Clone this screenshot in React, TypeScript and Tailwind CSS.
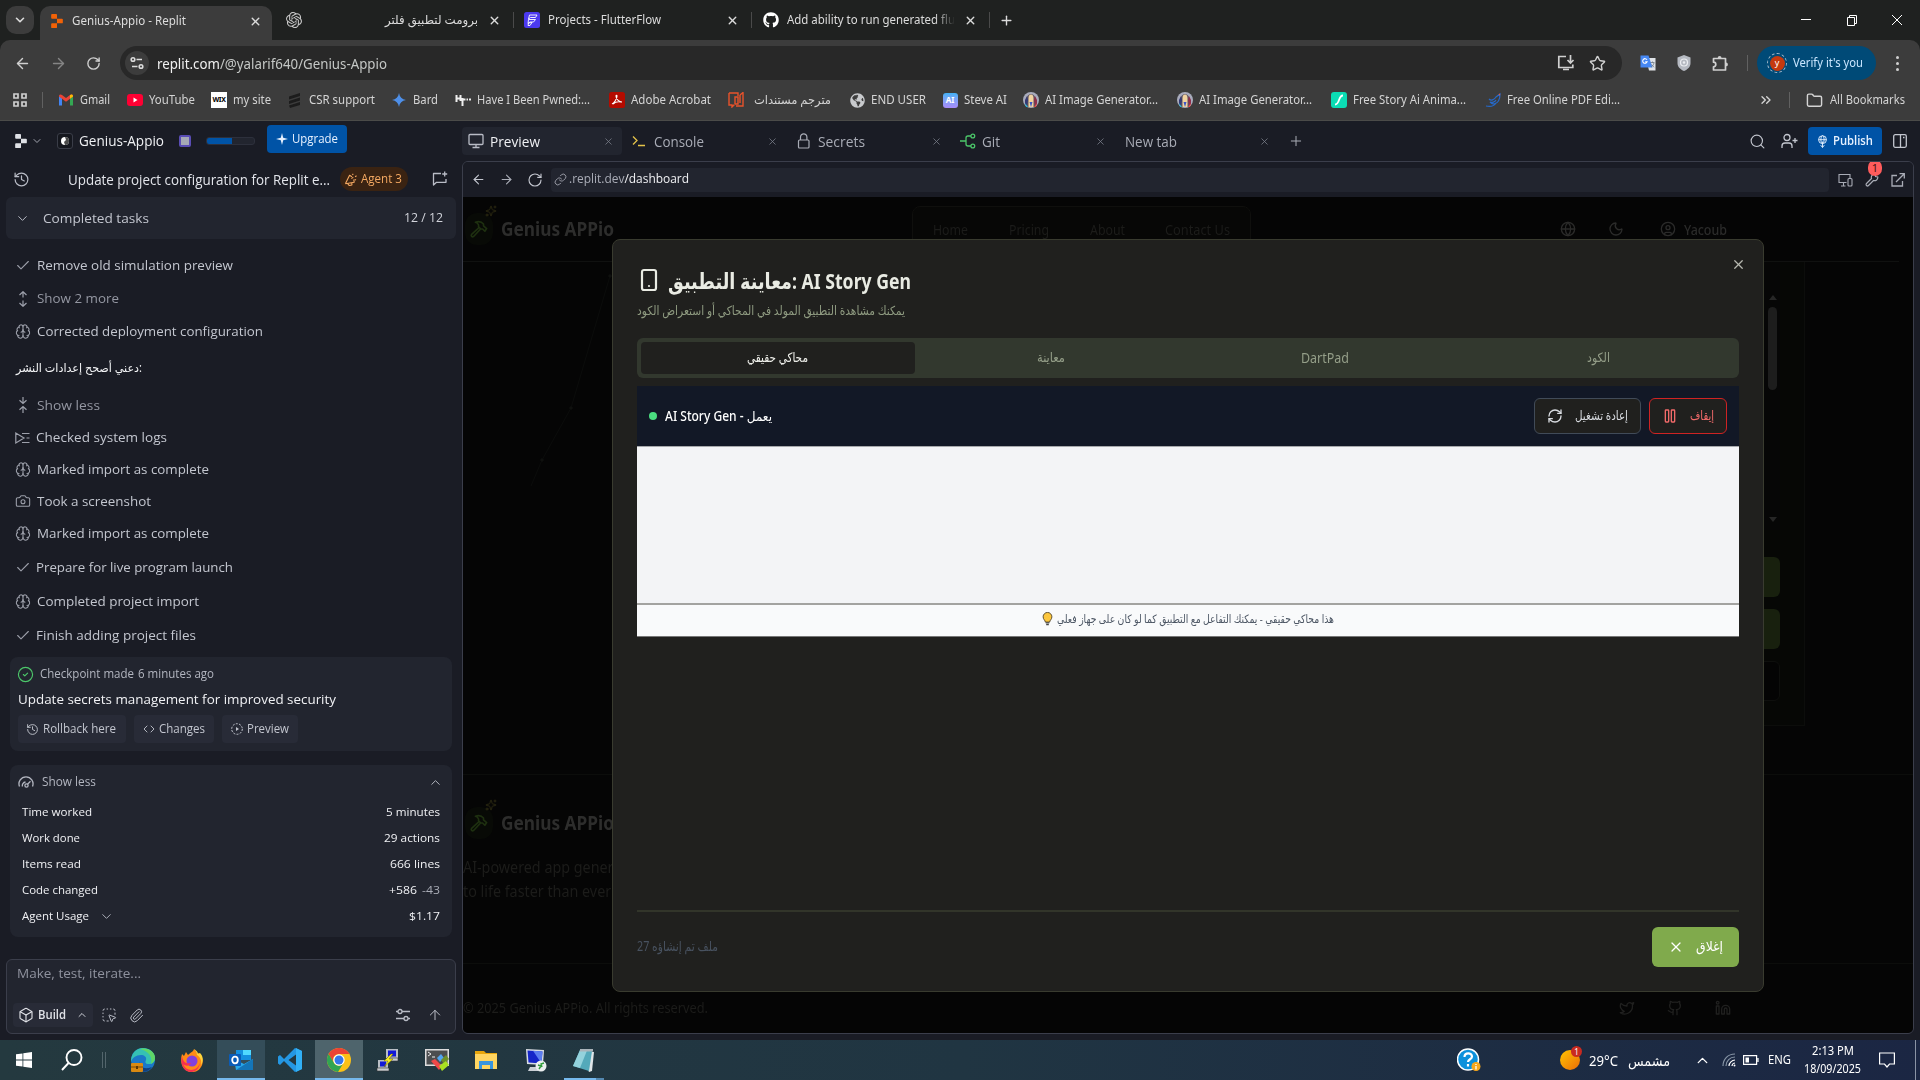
import React, { useLayoutEffect, useRef, useState } from "react";
import {
  ArrowLeft, ArrowRight, ArrowUp, Brain, Camera, Check, ChevronDown, ChevronUp, CircleCheck,
  Code, History, Link, Moon, Globe, Linkedin, Github, Twitter, CircleUser, RefreshCw, X, Plus,
  Search, Paperclip, Box, Star, Folder, Sparkles, Smartphone, ChevronsRight, RotateCw, Gauge,
  SquareDashedMousePointer, Pause, Hammer,
} from "lucide-react";
import { SiOpenai, SiReplit } from "react-icons/si";
import { FaGithub, FaGlobeAmericas } from "react-icons/fa";

type FitProps = { w: number; className?: string; children: React.ReactNode };

/* A single line of text condensed or widened to fill its slot. */
function Fit({ w, className = "", children }: FitProps) {
  const ref = useRef<HTMLSpanElement>(null);
  const [scale, setScale] = useState(1);
  useLayoutEffect(() => {
    const natural = ref.current ? ref.current.getBoundingClientRect().width / scale : 0;
    if (natural) setScale(w / natural);
  }, [w]);
  return (
    <span className={`inline-block shrink-0 whitespace-nowrap text-left ${className}`} style={{ width: w }}>
      <span ref={ref} className="inline-block origin-left" style={{ transform: `scaleX(${scale})` }}>{children}</span>
    </span>
  );
}

/* ---------- Browser chrome ---------- */

function FlutterFlowIcon() {
  return (
    <svg viewBox="0 0 16 16" className="size-4 shrink-0">
      <rect width="16" height="16" rx="2.5" fill="#4B39EF" />
      <path d="M5.500 3h7.500l-1.500 2.500H6.500L4.500 7zM4.500 7.500h7L9.500 10H6l-2 1.500zM4.500 11l3.500-.5-2 3h-2z" fill="none" stroke="#fff" strokeWidth=".9" />
    </svg>
  );
}

function TabStrip() {
  return (
    <div className="flex h-10 items-center bg-[#1f2120] text-[12px] text-[#dcdcdc]">
      <div className="ml-1.5 flex size-7 items-center justify-center rounded-[10px] bg-[#3c3c3c]"><ChevronDown size={14} strokeWidth={2.8} /></div>
      <div className="ml-1.5 mt-1.5 flex h-[34px] w-[232px] items-center rounded-t-[10px] bg-[#3c3c3c] pb-1">
        <SiReplit className="ml-2.5 size-3.5 text-[#f26207]" />
        <Fit w={114} className="ml-2">Genius-Appio - Replit</Fit>
        <X size={13} strokeWidth={2.6} className="ml-[63px]" />
      </div>
      <SiOpenai className="ml-3.5 size-4 text-[#c9c9c9]" />
      <Fit w={93} className="ml-[83px]">برومت لتطبيق فلتر</Fit>
      <X size={13} strokeWidth={2.6} className="ml-[10px]" />
      <span className="ml-3 h-4 w-px bg-[#4a4a4a]" />
      <span className="ml-2.5 flex"><FlutterFlowIcon /></span>
      <Fit w={113} className="ml-2">Projects - FlutterFlow</Fit>
      <X size={13} strokeWidth={2.6} className="ml-[65px]" />
      <span className="ml-3 h-4 w-px bg-[#4a4a4a]" />
      <FaGithub className="ml-[11px] size-4 text-white" />
      <Fit w={168} className="ml-2 [mask-image:linear-gradient(to_right,black_88%,transparent)]">Add ability to run generated flu</Fit>
      <X size={13} strokeWidth={2.6} className="ml-[9px]" />
      <span className="ml-3 h-4 w-px bg-[#4a4a4a]" />
      <Plus size={15} strokeWidth={2.2} className="ml-[9px]" />
      <svg viewBox="0 0 102 12" className="ml-auto mr-[17px] h-3 w-[102px] shrink-0" fill="none" stroke="#fff" strokeWidth="1">
        <path d="M0 5.5h10M46.500 3.500h7v8h-7zM48.500 3.500v-2h7v8h-2M91 1l10 10M101 1L91 11" />
      </svg>
    </div>
  );
}

function TranslateIcon() {
  return (
    <svg viewBox="0 0 16 16" className="size-4 shrink-0">
      <path d="M6 3h9.500v12.500H9z" fill="#dfe3e8" />
      <path d="M.5.5h8l4 12H.5z" fill="#4688f4" />
      <path d="M7 4.800A2.300 2.300 0 1 0 7.200 6.700H5.200" fill="none" stroke="#fff" strokeWidth="1.100" />
      <path d="M10.500 7.500h4M12.500 6.500v1M14 8c-.5 2-1.500 3-2.800 4M11.500 9.500l2.500 2.800" stroke="#6b7680" strokeWidth=".8" fill="none" />
    </svg>
  );
}

function Toolbar() {
  return (
    <div className="bg-[#1f2120]">
      <div className="flex h-10 items-center rounded-t-[10px] bg-[#3c3c3c] text-[#d0d0d0]">
        <ArrowLeft size={17} className="ml-[14px] mt-1.5" />
        <ArrowRight size={17} className="ml-[19px] mt-1.5 text-[#858585]" />
        <RotateCw size={15} strokeWidth={2.2} className="ml-[19px] mt-1.5" />
        <div className="ml-[19px] mt-1.5 flex h-[34px] w-[1502px] items-center rounded-full bg-[#282828]">
          <span className="ml-[5px] flex size-6 items-center justify-center rounded-full bg-[#3c3c3c]">
            <svg viewBox="0 0 14 14" className="size-3.5" fill="none" stroke="#dcdcdc" strokeWidth="1.600">
              <circle cx="3" cy="3.500" r="1.800" /><path d="M6.500 3.500H12M2 10.500h5.500" /><circle cx="11" cy="10.500" r="1.800" />
            </svg>
          </span>
          <Fit w={230} className="ml-2 text-[14px] text-[#c4c7c5]"><span className="text-[#f0f0f0]">replit.com</span>/@yalarif640/Genius-Appio</Fit>
          <svg viewBox="0 0 18 16" className="ml-auto h-4 w-[18px]" fill="none" stroke="currentColor" strokeWidth="1.700"><path d="M9 1.500H1.800v11h14V9.500M6 14.500h6" strokeWidth="1.700" /><path d="M13.500 0v7.500M10.500 5l3 3 3-3" /></svg>
          <Star size={17} className="ml-3.5 mr-4" />
        </div>
        <div className="mt-1.5 flex flex-1 items-center">
          <span className="ml-[18px] flex"><TranslateIcon /></span>
          <svg viewBox="0 0 16 16" className="ml-5 size-4"><path d="M8 0l6.500 2.500V8c0 4-3 6.500-6.500 8-3.500-1.500-6.500-4-6.500-8V2.500z" fill="#b6bac2" /><circle cx="8" cy="7.500" r="3.500" fill="none" stroke="#eceef2" strokeWidth="1.200" /><circle cx="8" cy="7.500" r="1.200" fill="#eceef2" /></svg>
          <svg viewBox="0 0 17 17" className="ml-5 size-[17px]"><path d="M1.500 3.500h12v11.500h-12v-3.200a2.300 2.300 0 0 0 0-4.600z" fill="none" stroke="#d0d0d0" strokeWidth="1.700" strokeLinejoin="round" /><path d="M5.700 3a1.900 1.900 0 0 1 3.800 0zM14 7.500a1.900 1.900 0 0 1 0 3.800z" fill="#d0d0d0" /></svg>
          <span className="ml-[18px] h-4 w-px bg-[#616161]" />
          <div className="ml-[9px] flex h-[34px] w-[119px] items-center rounded-full bg-[#004a77]">
            <span className="ml-2.5 flex size-5 items-center justify-center rounded-full border border-dashed border-[#a9bccb]">
              <span className="flex size-[15px] items-center justify-center rounded-full bg-[#c5390f] pb-0.5 text-[9px] leading-none text-white">y</span>
            </span>
            <Fit w={70} className="ml-1.5 text-[12px] text-[#c9e6ff]">Verify it's you</Fit>
          </div>
          <span className="ml-5 flex flex-col gap-[3px]">
            <i className="size-[3px] rounded-full bg-[#d0d0d0]" /><i className="size-[3px] rounded-full bg-[#d0d0d0]" /><i className="size-[3px] rounded-full bg-[#d0d0d0]" />
          </span>
        </div>
      </div>
    </div>
  );
}

const parrot = (
  <svg viewBox="0 0 16 16" className="size-4">
    <circle cx="8" cy="8" r="8" fill="#a9acbd" /><path d="M3 9a5 7 0 0 1 10 0v6H3z" fill="#5f5560" /><path d="M5.500 6.500a2.500 4 0 0 1 5 0V15h-5z" fill="#f1d3a0" />
    <path d="M2 8l2-4 1 4-1 6-2-2z" fill="#353a74" /><path d="M14 8l-2-4-1 4 1 6 2-2z" fill="#8c2f4b" /><path d="M6.500 10h3l-1.500 5z" fill="#3a56c9" /><path d="M2 11l3 4H3z" fill="#29b6d8" /><path d="M14 11l-3 4h2z" fill="#e64a4a" />
  </svg>
);

const bookmarks: { icon: React.ReactNode; text: string; w: number; gap: number; tg?: number }[] = [
  { icon: <svg viewBox="0 0 16 16" className="size-4"><path d="M1 13.500V4l3 2.200v7.300z" fill="#4285f4" /><path d="M15 13.500V4l-3 2.200v7.300z" fill="#34a853" /><path d="M1 4c0-1.800 1.800-2 3-1.100L8 6l4-3.100c1.200-.9 3-.7 3 1.100v.5l-7 5.200-7-5.200z" fill="#ea4335" /><path d="M12 2.900c1.200-.9 3-.7 3 1.100v.5l-3 2.200z" fill="#fbbc04" /></svg>, text: "Gmail", w: 30, gap: 15 },
  { icon: <svg viewBox="0 0 16 16" className="size-4"><rect y="2" width="16" height="12" rx="3" fill="#f03" /><path d="M6.500 5.500v5l4-2.500z" fill="#fff" /></svg>, text: "YouTube", w: 46, gap: 17 },
  { icon: <span className="flex size-4 items-center justify-center bg-white text-[7px] font-bold tracking-tighter text-black">WIX</span>, text: "my site", w: 38, gap: 16 },
  { icon: <svg viewBox="0 0 16 16" className="size-4"><path d="M2 4.500L13 1v3L2 7.500zM2 9l11-3.500v3L2 12zM2 13.500L13 10v3L3 16z" fill="#1c1c1c" /></svg>, text: "CSR support", w: 66, gap: 16 },
  { icon: <svg viewBox="0 0 16 16" className="size-4"><path d="M8 1c.6 4 3 6.400 7 7-4 .6-6.400 3-7 7-.6-4-3-6.400-7-7 4-.6 6.400-3 7-7z" fill="#4e8fe8" /></svg>, text: "Bard", w: 25, gap: 16 },
  { icon: <svg viewBox="0 0 16 16" className="size-4" stroke="#eee" strokeWidth="2" fill="none"><path d="M1.500 3v7M1 6.500h4M5.500 3v6M7.500 6v8M7 7.500h3.500M11.500 7.500h1.500M14 7.500h2" /></svg>, text: "Have I Been Pwned:...", w: 113, gap: 17 },
  { icon: <svg viewBox="0 0 16 16" className="size-4"><rect width="16" height="16" rx="2.500" fill="#b30b00" /><path d="M3 12c2-1 5-5 5-8 0-1-1-1-1 0 0 3 3 6 6 6M4 12c2-2 5-2.500 8-2" fill="none" stroke="#fff" strokeWidth="1.100" /></svg>, text: "Adobe Acrobat", w: 80, gap: 19 },
  { icon: <svg viewBox="0 0 16 16" className="size-4" fill="none" stroke="#e8532b" strokeWidth="1.400"><path d="M1 1h9v3M1 1v12h3v2l2.500-2.500M7 12V5h3v7H7M12 3v0l3-2.500V14H8M12 3v8" /></svg>, text: "مترجم مستندات", w: 77, gap: 17, tg: 10 },
  { icon: <FaGlobeAmericas className="size-[15px] text-[#c8cacd]" />, text: "END USER", w: 55, gap: 18 },
  { icon: <span className="flex size-[15px] items-center justify-center rounded-[3px] bg-gradient-to-b from-[#3fb1f5] to-[#a78bfa] text-[8px] font-bold text-white">AI</span>, text: "Steve AI", w: 43, gap: 16 },
  { icon: parrot, text: "AI Image Generator...", w: 113, gap: 16 },
  { icon: parrot, text: "AI Image Generator...", w: 113, gap: 19 },
  { icon: <svg viewBox="0 0 16 16" className="size-4"><rect width="16" height="16" rx="3" fill="#0bdcb4" /><path d="M4 12.500c5 0 3-9 8-9" stroke="#fff" strokeWidth="1.800" fill="none" /></svg>, text: "Free Story Ai Anima...", w: 113, gap: 19 },
  { icon: <svg viewBox="0 0 16 16" className="size-4" fill="none" stroke="#2669c9" strokeWidth="1.200"><path d="M1 14c4 1 8 0 10-3M4 7c2 2 5 1 7-2l4-3c0 4-1 9-6 10-2 0-3-1-4-2 2 1 5 0 6-2" /><path d="M14 2l1 1" stroke="#e53" /></svg>, text: "Free Online PDF Edi...", w: 113, gap: 19 },
];

function BookmarksBar() {
  return (
    <div className="flex h-[41px] items-center border-b border-[#4b4b49] bg-[#3c3c3c] text-[12px] text-[#d4d4d4]">
      <svg viewBox="0 0 14 14" className="ml-[13px] size-3.5" fill="none" stroke="#cfcfcf" strokeWidth="1.700"><path d="M1 1h4v4H1zM9 1h4v4H9zM1 9h4v4H1zM9 9h4v4H9z" /></svg>
      <span className="ml-[15px] h-4 w-px bg-[#616161]" />
      {bookmarks.map((b, i) => (
        <span key={i} className="flex shrink-0 items-center" style={{ marginLeft: b.gap }}>
          <span className="flex w-4 shrink-0 justify-center">{b.icon}</span>
          <span className="flex" style={{ marginLeft: b.tg ?? 6 }}><Fit w={b.w}>{b.text}</Fit></span>
        </span>
      ))}
      <ChevronsRight size={16} className="ml-auto" />
      <span className="ml-[15px] h-4 w-px bg-[#616161]" />
      <Folder size={17} className="ml-4" />
      <Fit w={75} className="ml-[7px] mr-[15px]">All Bookmarks</Fit>
    </div>
  );
}

/* ---------- Agent side panel ---------- */

function CollapseIcon() {
  return <svg viewBox="0 0 16 16" className="size-4" fill="none" stroke="currentColor" strokeWidth="1.200"><path d="M8 0v6M4.500 3.200L8 6.500l3.500-3.300M8 16v-6M4.500 12.800L8 9.500l3.500 3.300" /></svg>;
}
function ExpandIcon() {
  return <svg viewBox="0 0 16 16" className="size-4" fill="none" stroke="currentColor" strokeWidth="1.200"><path d="M8 .7V6.500M4.500 4L8 .7 11.500 4M8 15.300V9.500M4.500 12L8 15.300l3.500-3.300" /></svg>;
}
function LogsIcon() {
  return <svg viewBox="0 0 16 16" className="size-4" fill="none" stroke="currentColor" strokeWidth="1.200"><path d="M.8 3v10L9 8zM7 3.500h7.500M11.500 8h3M7 12.500h7.500" /></svg>;
}

const thin = 1.6;
const steps: { icon: React.ReactNode; text: string; w: number; h: number; dim?: boolean; tight?: boolean }[] = [
  { icon: <Check size={17} strokeWidth={thin} />, text: "Remove old simulation preview", w: 196, h: 34 },
  { icon: <ExpandIcon />, text: "Show 2 more", w: 82, h: 33, dim: true },
  { icon: <Brain size={17} strokeWidth={thin} />, text: "Corrected deployment configuration", w: 226, h: 33 },
  { icon: null, text: "دعني أصحح إعدادات النشر:", w: 126, h: 40 },
  { icon: <CollapseIcon />, text: "Show less", w: 63, h: 34, dim: true },
  { icon: <LogsIcon />, text: "Checked system logs", w: 131, h: 31, tight: true },
  { icon: <Brain size={17} strokeWidth={thin} />, text: "Marked import as complete", w: 172, h: 32 },
  { icon: <Camera size={18} strokeWidth={thin} />, text: "Took a screenshot", w: 114, h: 32 },
  { icon: <Brain size={17} strokeWidth={thin} />, text: "Marked import as complete", w: 172, h: 32 },
  { icon: <Check size={17} strokeWidth={thin} />, text: "Prepare for live program launch", w: 197, h: 36, tight: true },
  { icon: <Brain size={17} strokeWidth={thin} />, text: "Completed project import", w: 162, h: 32 },
  { icon: <Check size={17} strokeWidth={thin} />, text: "Finish adding project files", w: 160, h: 36, tight: true },
];

function StatRow({ label, lw, children }: { label: React.ReactNode; lw: number; children: React.ReactNode }) {
  return (
    <div className="flex h-[26px] items-center justify-between pl-3 pr-3">
      <span className="flex items-center"><Fit w={lw}>{label}</Fit>{label === "Agent Usage" && <ChevronDown size={15} strokeWidth={1.6} className="ml-2.5 text-[#a9acb6]" />}</span>
      <span className="flex items-center gap-[5px]">{children}</span>
    </div>
  );
}

function AgentPanel() {
  return (
    <div className="flex w-[462px] shrink-0 flex-col font-['Open_Sans','DejaVu_Sans',sans-serif] text-[#e2e4ea]">
      <div className="flex h-10 items-center">
        <SiReplit className="ml-[14px] size-3.5 text-[#dfe1e6]" />
        <ChevronDown size={12} strokeWidth={2} className="ml-[3px] text-[#a0a3ad]" />
        <span className="ml-3.5 flex size-4 items-center justify-center rounded-[3px] border border-[#3a3d48] bg-[#15171e]">
          <svg viewBox="0 0 8 8" className="size-2"><circle cx="4" cy="4" r="4" fill="#fff" /><path d="M4 0a4 4 0 0 1 0 8L3 5l2-2z" fill="#4a4a4a" /></svg>
        </span>
        <Fit w={85} className="ml-1.5 text-[14.500px] text-[#f0f1f4]">Genius-Appio</Fit>
        <span className="ml-[15px] h-3 w-3 rounded-[2px] border-2 border-[#5a4db5] bg-[#a6a9b5]" />
        <span className="ml-[15px] flex h-2 w-[49px] overflow-hidden rounded-[3px] border border-[#2d303c] bg-[#22252f]"><i className="w-[25px] bg-[#0053a6]" /></span>
        <span className="-mt-1 ml-3 flex h-7 w-20 items-center rounded bg-[#0053a6] text-[12.500px] font-medium text-[#e6f1ff]">
          <svg viewBox="0 0 12 12" className="ml-[9px] size-3"><path d="M6 0l1.200 4.800L12 6 7.200 7.200 6 12 4.800 7.200 0 6l4.800-1.200z" fill="#e6f1ff" /></svg>
          <Fit w={46} className="ml-1">Upgrade</Fit>
        </span>
      </div>
      <div className="flex h-9 items-center">
        <History size={17} strokeWidth={1.700} className="ml-[13px] text-[#b9bcc6]" />
        <Fit w={262} className="ml-[38px] text-[14px] font-medium">Update project configuration for Replit e...</Fit>
        <span className="ml-2.5 flex h-6 w-[68px] items-center rounded-full bg-[#3a2312] text-[12px] text-[#f5a962]">
          <svg viewBox="0 0 14 14" className="ml-1 size-[13px]" fill="none" stroke="currentColor" strokeWidth="1.200"><path d="M1.500 11.500L6 2.500l2.500 1.500M1.500 11.500L11 10l-.5-3M4 11.500l1.500 2 3-.5v-2M8 6l2-1.500M9 2l1-1M12 4l1.500-1M11.500 7l1.500.5" strokeLinejoin="round" /></svg>
          <Fit w={41} className="ml-1">Agent 3</Fit>
        </span>
        <svg viewBox="0 0 16 16" className="ml-6 size-4 text-[#b9bcc6]" fill="none" stroke="currentColor" strokeWidth="1.300"><path d="M9 2.500H1.500V14l3-2.700h9.500V8M12.700.5v5M10.200 3h5" strokeLinejoin="round" /></svg>
      </div>
      <div className="mx-1.5 flex h-[42px] items-center rounded-md bg-[#22252f]">
        <ChevronDown size={15} strokeWidth={1.600} className="ml-[9px] text-[#b9bcc6]" />
        <Fit w={106} className="ml-[13px] text-[13.500px] text-[#c3c6cf]">Completed tasks</Fit>
        <Fit w={39} className="ml-auto mr-[13px] text-[12.500px] text-[#d2d4db]">12 / 12</Fit>
      </div>
      <div className="mt-[9px] pl-[15px] text-[13.500px] text-[#c3c6cf]">
        {steps.map((s, i) => (
          <div key={i} className={`flex items-center ${s.dim ? "text-[#9497a2]" : ""}`} style={{ height: s.h }}>
            {s.icon && <span className={`flex w-4 shrink-0 justify-center text-[#9da0ab] ${s.tight ? "mr-[5px]" : "mr-1.5"}`}>{s.icon}</span>}
            <Fit w={s.w} className={s.icon ? "" : "ml-px text-[12px] text-[#f3f4f6]"}>{s.text}</Fit>
          </div>
        ))}
      </div>
      <div className="mx-2.5 mt-1 h-[94px] rounded-lg bg-[#22252f] px-2">
        <div className="flex h-[34px] items-center text-[12px] text-[#b3b6c0]">
          <CircleCheck size={17} strokeWidth={1.600} className="-ml-px text-[#4cc76a]" />
          <Fit w={94} className="ml-1.5">Checkpoint made</Fit>
          <Fit w={76} className="ml-1">6 minutes ago</Fit>
        </div>
        <div className="flex h-4 items-center"><Fit w={318} className="text-[13.500px] text-[#f0f1f4]">Update secrets management for improved security</Fit></div>
        <div className="mt-2 flex gap-2 text-[12px] text-[#c3c6cf]">
          <span className="flex h-7 w-[108px] items-center rounded bg-[#282b37] pl-2"><History size={13} strokeWidth={1.700} /><Fit w={73} className="ml-1">Rollback here</Fit></span>
          <span className="flex h-7 w-20 items-center rounded bg-[#282b37] pl-[9px]"><Code size={12} strokeWidth={1.800} /><Fit w={46} className="ml-1">Changes</Fit></span>
          <span className="flex h-7 w-[76px] items-center rounded bg-[#282b37] pl-[9px]">
            <svg viewBox="0 0 12 12" className="size-3" fill="none" stroke="currentColor"><circle cx="6" cy="6" r="5.300" strokeDasharray="2 1.300" /><path d="M5 4v4l3-2z" fill="currentColor" stroke="none" /></svg>
            <Fit w={42} className="ml-1">Preview</Fit>
          </span>
        </div>
      </div>
      <div className="mx-2.5 mt-3.5 h-[172px] rounded-lg bg-[#22252f] text-[11.500px] font-medium text-[#f0f1f4]">
        <div className="flex h-[34px] items-center pl-2 pr-2.5 text-[12px] font-normal text-[#b3b6c0]">
          <svg viewBox="0 0 16 16" className="size-4" fill="none" stroke="currentColor" strokeWidth="1.300"><path d="M1.500 12.500a7 7 0 1 1 13 0M4.500 12.500a3.500 3.500 0 0 1 3-4.500" /><circle cx="8.500" cy="11.500" r="1.600" /><path d="M9.500 10.300l3-3" /></svg>
          <Fit w={54} className="ml-2">Show less</Fit>
          <ChevronUp size={15} strokeWidth={1.600} className="ml-auto -mr-px" />
        </div>
        <StatRow label="Time worked" lw={70}><Fit w={54}>5 minutes</Fit></StatRow>
        <StatRow label="Work done" lw={58}><Fit w={56}>29 actions</Fit></StatRow>
        <StatRow label="Items read" lw={59}><Fit w={50}>666 lines</Fit></StatRow>
        <StatRow label="Code changed" lw={76}><Fit w={28}>+586</Fit><Fit w={18} className="font-normal text-[#a9acb6]">-43</Fit></StatRow>
        <StatRow label="Agent Usage" lw={67}><Fit w={31}>$1.17</Fit></StatRow>
      </div>
      <div className="mx-1.5 mt-[22px] flex h-[75px] flex-col justify-between rounded-md border border-[#3b3e4b] bg-[#22252f] pb-1.5 pl-1.5 pr-3">
        <Fit w={124} className="ml-1 mt-[3px] text-[13.500px] text-[#8f929e]">Make, test, iterate...</Fit>
        <div className="flex items-center text-[#b9bcc6]">
          <span className="flex h-6 w-20 items-center rounded bg-[#282b37] pl-[5px] text-[12px] font-semibold text-[#dfe1e6]">
            <Box size={16} strokeWidth={1.700} /><Fit w={28} className="ml-1">Build</Fit><ChevronUp size={12} strokeWidth={1.800} className="ml-2.5" />
          </span>
          <SquareDashedMousePointer size={16} strokeWidth={1.500} className="ml-2" />
          <Paperclip size={15} strokeWidth={1.600} className="ml-3" />
          <svg viewBox="0 0 16 16" className="ml-auto size-4" fill="none" stroke="currentColor" strokeWidth="1.300"><circle cx="5" cy="4.500" r="2" /><circle cx="11" cy="11.500" r="2" /><path d="M1 4.500h2M7 4.500h8M1 11.500h8M13 11.500h2" /></svg>
          <ArrowUp size={16} strokeWidth={1.500} className="ml-4" />
        </div>
      </div>
    </div>
  );
}

/* ---------- Workspace ---------- */

function WorkTab({ icon, text, w, active }: { icon?: React.ReactNode; text: string; w: number; active?: boolean }) {
  return (
    <span className={`flex h-7 w-40 shrink-0 items-center rounded pr-2 ${icon ? "pl-1.5" : "pl-[7px]"} ${active ? "bg-[#22252f] text-[#f0f1f4]" : "text-[#a9acb6]"}`}>
      {icon && <span className="mr-1.5 flex w-4 justify-center">{icon}</span>}
      <Fit w={w}>{text}</Fit>
      <X size={11} strokeWidth={1.700} className="ml-auto text-[#7c7f8b]" />
    </span>
  );
}

function WorkTabs() {
  return (
    <div className="flex h-10 items-center gap-1 font-['Open_Sans',sans-serif] text-[14px]">
      <WorkTab active icon={<Monitor16 />} text="Preview" w={50} />
      <WorkTab icon={<svg viewBox="0 0 14 14" className="mr-0.5 size-3.5" fill="none" strokeWidth="1.300"><path d="M1 2.500l4 4-4 4M6 11.500h7" stroke="#e5c34a" /></svg>} text="Console" w={50} />
      <WorkTab icon={<svg viewBox="0 0 16 16" className="size-4" fill="none" stroke="currentColor" strokeWidth="1.200"><rect x="2.500" y="7" width="10.500" height="8" rx="1" /><path d="M4.500 7V4a3.200 3.200 0 0 1 6.400 0v3" /></svg>} text="Secrets" w={47} />
      <WorkTab icon={<svg viewBox="0 0 16 16" className="size-4" fill="none" stroke="#4cc76a" strokeWidth="1.300"><path d="M0 8h6M11 3H8a2 2 0 0 0-2 2v6a2 2 0 0 0 2 2h3" /><circle cx="12.800" cy="3" r="1.900" /><circle cx="12.800" cy="13" r="1.900" /></svg>} text="Git" w={18} />
      <WorkTab text="New tab" w={52} />
      <Plus size={16} strokeWidth={1.500} className="ml-1.5 text-[#a9acb6]" />
      <span className="flex-1" />
      <Search size={17} strokeWidth={1.600} className="text-[#c3c6cf]" />
      <svg viewBox="0 0 17 16" className="ml-[11px] h-4 w-[17px] text-[#c3c6cf]" fill="none" stroke="currentColor" strokeWidth="1.300"><circle cx="6" cy="4.500" r="3" /><path d="M1 15v-2a3 3 0 0 1 3-3h4a3 3 0 0 1 3 3v2M14 5v5M11.500 7.500h5" /></svg>
      <span className="ml-1.5 flex h-7 w-[74px] items-center rounded bg-[#0053a6] text-[12px] font-semibold text-[#e6f1ff]">
        <svg viewBox="0 0 12 14" className="ml-[9px] h-[13px] w-[11px]" fill="none" stroke="currentColor" strokeWidth="1"><circle cx="6" cy="5" r="4.300" /><ellipse cx="6" cy="5" rx="1.800" ry="4.300" /><path d="M1.700 5h8.600M6 7v6.500M4 11l2 2.500L8 11" /></svg>
        <Fit w={40} className="ml-[5px]">Publish</Fit>
      </span>
      <svg viewBox="0 0 14 14" className="ml-[7px] mr-[13px] size-3.5 text-[#c3c6cf]" fill="none" stroke="currentColor" strokeWidth="1.300"><rect x=".7" y=".7" width="12.600" height="12.600" rx="1.500" /><path d="M7.500.7v12.600M10 3.500h1.500" /></svg>
    </div>
  );
}

function Monitor16() {
  return <svg viewBox="0 0 16 16" className="size-4 text-[#b9bcc6]" fill="none" stroke="currentColor" strokeWidth="1.300"><rect x="1" y="1.500" width="14" height="10" rx="1" /><path d="M8 11.500v3M4.500 14.500h7" /></svg>;
}

function AddressRow() {
  return (
    <div className="flex h-[35px] shrink-0 items-center bg-[#1a1c25] font-['Open_Sans',sans-serif] text-[12.500px] text-[#a9acb6]">
      <ArrowLeft size={15} strokeWidth={1.700} className="ml-2 text-[#c3c6cf]" />
      <ArrowRight size={15} strokeWidth={1.700} className="ml-[13px]" />
      <RotateCw size={16} strokeWidth={1.700} className="ml-[13px] text-[#c3c6cf]" />
      <span className="ml-2 flex h-6 flex-1 items-center rounded bg-[#22252f] pl-[3px]">
        <Link size={13} strokeWidth={1.600} />
        <Fit w={120} className="ml-0.5"><span>.replit.dev</span><span className="text-[#f0f1f4]">/dashboard</span></Fit>
      </span>
      <svg viewBox="0 0 15 14" className="ml-[9px] h-3.5 w-[15px]" fill="none" stroke="currentColor" strokeWidth="1.100"><path d="M8.500 9.500H1v-8h11V5M3 13h4.500M5.500 9.500V13" /><rect x="10" y="5.500" width="4" height="7.500" rx="1" /></svg>
      <span className="relative ml-3">
        <svg viewBox="0 0 14 14" className="size-3.5" fill="none" stroke="currentColor" strokeWidth="1.200"><path d="M1.500 10.500l5-5a3.300 3.300 0 0 1 4-4.300v2.300l2.300.5a3.300 3.300 0 0 1-4.300 3.500l-5 5a1.400 1.400 0 0 1-2-2z" /></svg>
        <span className="absolute -top-[13px] left-[3px] flex h-4 w-3.5 items-center justify-center rounded-full bg-[#ff5c5c] text-[11px] leading-none text-[#3a0b0b]">1</span>
      </span>
      <svg viewBox="0 0 14 14" className="ml-3 mr-2 size-3.5" fill="none" stroke="currentColor" strokeWidth="1.300"><path d="M6 2.500H1v10.500h10.500V8M5 9l8-8M8.500.700h4.800v4.800" /></svg>
    </div>
  );
}

function BrandMark() {
  return (
    <span className="flex items-center">
      <span className="relative ml-[2px] flex h-8 w-7 items-center justify-center rounded-xl bg-[#080a06]">
        <svg viewBox="0 0 20 20" className="size-[18px]" fill="none" stroke="#1e3010" strokeWidth="1.800" strokeLinejoin="round"><path d="M10 8.500L1.800 16a1.600 1.600 0 0 0 2.200 2.300l7.500-8M6 2.500c4-1.500 7-.5 9 2v2l3.500 3-2 3-2.500-2.500h-2l-2.500-2.500v-2C9 4 8 3 6 2.500z" /></svg>
        <Sparkles size={12} strokeWidth={1.800} className="absolute -right-1 -top-2 text-[#2c2a12]" />
      </span>
      <Fit w={113} className="ml-2 text-[20px] font-bold text-[#2d2d2c]">Genius APPio</Fit>
    </span>
  );
}

function DimmedPage() {
  return (
    <div className="flex h-full flex-col bg-[#050505] text-[#1c1c1a]">
      <div className="mr-3.5 flex h-[65px] items-center border-b border-[#101110]">
        <BrandMark />
        <div className="ml-[298px] flex h-[46px] w-[339px] items-center rounded-lg border border-[#0f0f0d] bg-[#070706] pl-5 text-[14px]">
          <Fit w={35}>Home</Fit><Fit w={40} className="ml-[41px]">Pricing</Fit><Fit w={35} className="ml-[41px]">About</Fit><Fit w={65} className="ml-10">Contact Us</Fit>
        </div>
        <div className="ml-auto mr-[172px] flex items-center text-[14px] font-medium text-[#2b2b2a]">
          <Globe size={16} /><Moon size={16} className="ml-8" /><CircleUser size={16} className="ml-9" /><Fit w={43} className="ml-2">Yacoub</Fit>
        </div>
      </div>
      <div className="flex h-[513px] border-b border-[#0c0d0b]">
        <svg viewBox="0 0 150 400" className="h-[400px] w-[150px]" stroke="#0b0c0b" fill="#111210" strokeWidth="1">
          <path d="M147 14L108 146L79 198L68 224" fill="none" /><circle cx="147" cy="14" r="1.500" /><circle cx="108" cy="146" r="1.500" /><circle cx="79" cy="198" r="1.500" />
        </svg>
        <div className="ml-auto mr-[108px] h-[464px] w-[60px] border-b border-r border-[#0c0d0b] bg-[#060705] pr-6">
          <div className="flex h-[268px] w-[35px] flex-col items-end bg-[#060606] pr-[3px]">
            <i className="mt-[33px] border-x-[4px] border-b-[5px] border-transparent border-b-[#262626]" />
            <i className="mt-[7px] h-[83px] w-[9px] rounded-full bg-[#1d1d1d]" />
            <i className="mt-[127px] border-x-[4px] border-t-[5px] border-transparent border-t-[#262626]" />
          </div>
          <div className="mt-[27px] h-10 rounded-md bg-[#18200e]" />
          <div className="mt-3 h-10 rounded-md bg-[#18200e]" />
          <div className="mt-3 h-10 rounded-md border border-[#0e0f0d] bg-[#040404]" />
        </div>
      </div>
      <div className="flex h-[189px] flex-col border-b border-[#0c0d0b] pt-8">
        <BrandMark />
        <div className="mt-4 flex flex-col text-[16px] leading-6">
          <Fit w={285}>AI-powered app generation bringing ideas</Fit>
          <Fit w={268}>to life faster than ever before. Start now</Fit>
        </div>
      </div>
      <div className="flex flex-1 items-center pb-0.5 pt-5 text-[14px]">
        <Fit w={245}>© 2025 Genius APPio. All rights reserved.</Fit>
        <div className="ml-auto mr-[182px] flex gap-8 text-[#20201f]"><Twitter size={16} /><Github size={16} /><Linkedin size={16} /></div>
      </div>
    </div>
  );
}

function PreviewDialog() {
  return (
    <div className="absolute left-[149px] top-[42px] flex h-[753px] w-[1152px] flex-col rounded-lg border border-[#393b2f] bg-[#20201e] px-6">
      <X size={15} strokeWidth={2} className="absolute right-[17px] top-[17px] text-[#b7b8b0]" />
      <div className="flex h-20 flex-col">
        <div className="mt-6 flex items-center">
          <Smartphone size={24} strokeWidth={2.200} className="text-[#e9ebe3]" />
          <Fit w={243} className="ml-[7px] text-[22px] font-bold leading-8 text-[#e9ebe3]">معاينة التطبيق: AI Story Gen</Fit>
        </div>
        <Fit w={268} className="mt-[5px] text-[12.500px] leading-5 text-[#8f9b81]">يمكنك مشاهدة التطبيق المولد في المحاكي أو استعراض الكود</Fit>
      </div>
      <div className="mt-[18px] grid h-10 shrink-0 grid-cols-4 rounded-md bg-[#32382e] p-1 text-[13px] text-[#949e88]">
        <span className="flex items-center justify-center rounded bg-[#20201e] text-[#f0f1ec]"><Fit w={61}>محاكي حقيقي</Fit></span>
        <span className="flex items-center justify-center"><Fit w={28}>معاينة</Fit></span>
        <span className="flex items-center justify-center pb-px"><Fit w={48} className="text-[14px]">DartPad</Fit></span>
        <span className="flex items-center justify-center"><Fit w={23}>الكود</Fit></span>
      </div>
      <div className="mt-2 flex h-[61px] shrink-0 items-center border-b border-[#a6a8ab] bg-[#121826] px-3">
        <i className="size-2 rounded-full bg-[#4ade80]" />
        <Fit w={107} className="ml-2 text-[13.500px] font-medium text-white">AI Story Gen - يعمل</Fit>
        <span className="ml-auto flex h-9 w-[107px] items-center rounded-md border border-[#414b58] bg-[#20201e] pl-3 text-[12.500px] text-[#d8dbe0]"><RefreshCw size={16} strokeWidth={2} /><Fit w={53} className="ml-3">إعادة تشغيل</Fit></span>
        <span className="ml-2 flex h-9 w-[78px] items-center rounded-md border border-[#cf2323] bg-[#20201e] pl-3 text-[12.500px] text-[#f26a6a]"><Pause size={16} strokeWidth={2} /><Fit w={24} className="ml-3">إيقاف</Fit></span>
      </div>
      <div className="h-[156px] shrink-0 bg-[#f3f4f6]" />
      <div className="flex h-[34px] shrink-0 items-center justify-center border-b border-t-2 border-b-[#777] border-t-[#a3a3a0] bg-[#f9fafb] pb-1 text-[11.500px] text-[#4b5563]">
        <svg viewBox="0 0 12 16" className="mr-1 h-3.5 w-[11px]"><path d="M3.500 11.500C3.500 9.500 1 8.500 1 5.500a5 5 0 0 1 10 0c0 3-2.500 4-2.500 6z" fill="#fcc63d" stroke="#4b3d20" strokeWidth="1" /><path d="M4 12.500h4M4.500 14.500h3" stroke="#444" strokeWidth="1.400" /></svg>
        <Fit w={277}>هذا محاكي حقيقي - يمكنك التفاعل مع التطبيق كما لو كان على جهاز فعلي</Fit>
      </div>
      <div className="mb-6 mt-auto flex h-[57px] items-end justify-between border-t-2 border-[#32352a]">
        <Fit w={81} className="mb-[11px] text-[13.500px] text-[#485260]">27 ملف تم إنشاؤه</Fit>
        <span className="flex h-10 w-[87px] items-center rounded-md bg-[#80aa4c] pl-4 text-[13px] text-white"><X size={16} strokeWidth={1.800} /><Fit w={27} className="ml-3">إغلاق</Fit></span>
      </div>
    </div>
  );
}

function Workspace() {
  return (
    <div className="flex min-w-0 flex-1 flex-col">
      <WorkTabs />
      <div className="mr-1.5 flex h-[873px] flex-col overflow-hidden rounded-md border border-[#3b3e4b]">
        <AddressRow />
        <div className="relative min-h-0 flex-1 font-['Noto_Sans','DejaVu_Sans',sans-serif]">
          <DimmedPage />
          <PreviewDialog />
        </div>
      </div>
    </div>
  );
}

/* ---------- Windows taskbar ---------- */

const ic = "size-6";
const apps: { icon: React.ReactNode; open?: boolean; focus?: boolean; part?: boolean }[] = [
  { icon: <svg viewBox="0 0 24 24" className={ic}><circle cx="12" cy="12" r="12" fill="#1b78c8" /><path d="M0 12C1 4 6 0 12 0s12 4 12 10c0 4-3 6-6 6-4 0-4-2-3-4 1-3-2-5-5-5-5 0-9 3-10 7z" fill="#35c1b4" /><path d="M9 1c8-2 15 3 15 9 0 3-2 5-4 6 2-9-4-13-11-15z" fill="#5fd767" /><path d="M9 13c-1 6 4 9 12 6-3 5-10 6-14 3z" fill="#123f7d" /><rect y="15" width="12" height="9" rx="1" fill="#d88912" /><path d="M0 19h12" stroke="#7a4a06" /><rect x="5" y="18" width="2" height="3" fill="#5a3604" /></svg> },
  { icon: <svg viewBox="0 0 24 24" className={ic}><path d="M2 6l2 2 2-4 2 3c3-3 5-3 6-6 2 2 3 4 3 5l2-1c4 4 5 9 2 14s-7 5-10 5C4 24-1 16 2 6z" fill="#ff8a16" /><path d="M14 1c2 2 3 5 3 6 3 2 5 5 4 10 3-4 2-9-1-12l-2 1c0-2-2-4-4-5z" fill="#ffd43a" /><circle cx="12" cy="13" r="5.500" fill="#8240dc" /><path d="M2 8c1 7 5 8 9 7-2 4-6 3-8 1 3 8 14 8 17-1-1 7-6 9-9 9C3 24 0 15 2 8z" fill="#f7314f" /></svg> },
  { open: true, icon: <svg viewBox="0 0 24 24" className={ic}><path d="M7 2h15v10H7z" fill="#1490df" /><path d="M14 2h8v5h-8z" fill="#50d9ff" /><path d="M5 11l10 5 9-5v11H7z" fill="#28a8ea" /><path d="M24 11L7 22h17z" fill="#1475b8" /><rect y="6" width="12" height="12" rx="1" fill="#0a5cb8" /><ellipse cx="6" cy="12" rx="2.800" ry="3.300" fill="none" stroke="#fff" strokeWidth="1.800" /></svg> },
  { icon: <svg viewBox="0 0 24 24" className={ic}><path d="M17 0l7 3v18l-7 3L6 13l-4 4-2-1.500V8.500L2 7l4 4zM18 6.500L10.500 12l7.500 5.500z" fill="#2497e3" fillRule="evenodd" /><path d="M18 0l6 3v18l-6 3z" fill="#31b0f5" /></svg> },
  { open: true, focus: true, icon: <svg viewBox="0 0 24 24" className={ic}><circle cx="12" cy="12" r="12" fill="#fbc116" /><path d="M1.600 6A12 12 0 0 1 22.400 6H12a6 6 0 0 0-5.500 8.500z" fill="#ea4335" /><path d="M1.600 6A12 12 0 0 0 11 24l5.500-9A5.500 5.500 0 0 1 7 15z" fill="#31a552" /><circle cx="12" cy="12" r="5.700" fill="#fff" /><circle cx="12" cy="12" r="4.500" fill="#3477ea" /></svg> },
  { icon: <svg viewBox="0 0 24 24" className={ic}><path d="M10 1h12v9H10zM2 12h10v8H2z" fill="#b9bec5" /><path d="M12 2.500h8v6h-8zM4 13.500h6v5H4z" fill="#1119d8" /><path d="M11 10h11v3H11zM1 20h12v3H1z" fill="#c9cdd2" stroke="#333" strokeWidth=".6" /><path d="M15 6L8 13h4l-4 6 9-8h-4l4-5z" fill="#f8f020" stroke="#776a00" strokeWidth=".5" /></svg> },
  { icon: <svg viewBox="0 0 24 24" className={ic}><path d="M0 1h24v17H0z" fill="#ddd" /><path d="M1.500 2.500h21v14h-21z" fill="#4c4e50" /><path d="M3 4l3 2-3 2M7 9h3" stroke="#eee" fill="none" /><path d="M12 10l4-4 3 4-4 4z" fill="#52a4f0" /><path d="M16 12l5-5 3 4-5 5z" fill="#6e8f28" /><path d="M6 13l4-2 7 7-3 4z" fill="#f04848" /><path d="M14 18l7-5 3 4-7 6z" fill="#a9e021" /></svg> },
  { icon: <svg viewBox="0 0 24 24" className={ic}><path d="M1 3h9l2 2h11v16H1z" fill="#e8a60c" /><path d="M1 6h22v15H1z" fill="#ffd561" /><path d="M5 13h14v8h-3v-4H8v4H5z" fill="#3a95dd" /></svg> },
  { icon: <svg viewBox="0 0 24 24" className={ic}><path d="M3 1l18 1-1 15-16-1z" fill="#d7dce2" /><path d="M4.500 2.500l15 1-1 12-13-1z" fill="#1526c8" /><path d="M10 2.800l9.500.7-1 12z" fill="#5c7ef0" /><path d="M7 19h8v4H5z" fill="#cbd0d6" /><circle cx="18" cy="18" r="5.500" fill="#eceff0" /><path d="M15 17l3 1-2 3M21 15l-3 1 1 3" stroke="#2f9a3a" fill="none" strokeWidth="1.400" /></svg> },
  { part: true, icon: <svg viewBox="0 0 24 24" className={ic}><path d="M8 2l14 2-2 19-3 1z" fill="#dfe5e8" /><path d="M8 2l12 1-3 20L1 18z" fill="#54a9ba" /><path d="M8 2l7 .6L8 20 1 18z" fill="#93d2dc" /><path d="M8 1h13v2.500H8z" fill="#aab4ba" /></svg> },
];

function Taskbar() {
  return (
    <div className="flex h-10 items-center bg-gradient-to-r from-[#24393f] via-[#203542] to-[#1b2643] text-[12.500px] text-white">
      <svg viewBox="0 0 16 16" className="ml-4 size-4"><path d="M0 2.300L6.500 1.400v6.200H0zM7.300 1.300L16 0v7.600H7.300zM0 8.400h6.500v6.200L0 13.700zM7.300 8.400H16V16l-8.700-1.300z" fill="#fff" /></svg>
      <svg viewBox="0 0 22 22" className="ml-[29px] size-[22px]" fill="none" stroke="#fff" strokeWidth="1.900"><circle cx="13" cy="8.500" r="7.500" /><path d="M7.500 14L1 21" /></svg>
      <span className="ml-[19px] mr-[13px] h-4 w-1 border-x border-[#53656c]" />
      <div className="flex h-full gap-px">
        {apps.map((a, i) => (
          <span key={i} className={`flex h-full w-12 flex-col items-center ${a.focus ? "bg-[#4e646c]" : a.open ? "bg-[#344d59]" : ""}`}>
            <span className="mt-2">{a.icon}</span>
            {a.open && <i className="mt-auto h-0.5 w-full bg-[#76b9ed]" />}
            {a.part && <i className="mt-auto h-0.5 w-10 border-r-8 border-[#5488b0] bg-[#76b9ed]" />}
          </span>
        ))}
      </div>
      <svg viewBox="0 0 24 24" className="ml-auto size-6"><circle cx="11" cy="11.500" r="10.500" fill="#0c91dc" stroke="#fff" strokeWidth="1.500" /><path d="M7.500 9c0-5 7.500-4.500 7.500-.5 0 3-4 2.500-4 5.500M11 16v2.500" stroke="#fff" strokeWidth="2.200" fill="none" /><circle cx="19" cy="18.500" r="4.500" fill="#f8a81c" /><path d="M19 16v1M19 18v3.500" stroke="#fff" strokeWidth="1.300" /></svg>
      <span className="relative ml-[79px] size-5 rounded-full bg-gradient-to-br from-[#ffc400] to-[#e96b07]"><i className="absolute -right-0.5 -top-1 flex size-[11px] items-center justify-center rounded-full bg-[#c92a20] text-[8px] not-italic leading-none">1</i></span>
      <Fit w={29} className="ml-[9px] text-[14px]">29°C</Fit>
      <Fit w={42} className="ml-2.5 text-[14px]">مشمس</Fit>
      <ChevronUp size={17} strokeWidth={1.900} className="ml-6" />
      <svg viewBox="0 0 14 14" className="ml-[11px] size-3.5" fill="none" strokeWidth="1.200"><path d="M1 13C1 6 6 1 13 1M4 13c0-5 4-9 9-9" stroke="#8795a6" /><path d="M7 13c0-3 3-6 6-6M10 13c0-1.500 1.500-3 3-3" stroke="#fff" /><circle cx="12.500" cy="12.500" r="1" fill="#fff" /></svg>
      <svg viewBox="0 0 16 10" className="ml-[7px] h-2.5 w-4" fill="none" stroke="#fff" strokeWidth="1.200"><path d="M.6.600h13v8.800H.6zM15 3v4" /><path d="M2.500 2.500h3.500v5H2.500z" fill="#fff" stroke="none" /></svg>
      <Fit w={23} className="ml-[9px]">ENG</Fit>
      <span className="ml-[13px] flex w-[57px] flex-col items-center text-[12px] leading-[18px]"><Fit w={42}>2:13 PM</Fit><Fit w={57}>18/09/2025</Fit></span>
      <svg viewBox="0 0 16 16" className="ml-[18px] size-4" fill="none" stroke="#fff" strokeWidth="1.200"><path d="M.6 1h14.800v11H10.500L8 15l-2.500-3H.6z" /></svg>
      <span className="ml-5 mr-1 h-full w-px bg-[#8a93a5]" />
    </div>
  );
}

export default function App() {
  return (
    <div className="flex h-[1080px] w-[1920px] flex-col overflow-hidden bg-[#1a1c25] font-['Noto_Sans','DejaVu_Sans',sans-serif]">
      <TabStrip />
      <Toolbar />
      <BookmarksBar />
      <div className="flex h-[919px]">
        <AgentPanel />
        <Workspace />
      </div>
      <Taskbar />
    </div>
  );
}
